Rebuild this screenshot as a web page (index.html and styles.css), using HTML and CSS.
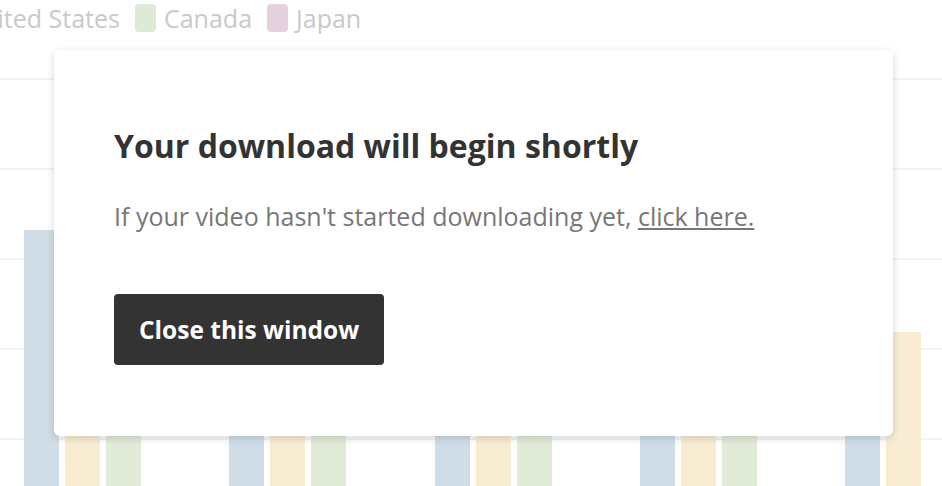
FILE: index.html
```html
<!DOCTYPE html>
<html lang="en">
<head>
    <meta charset="UTF-8">
    <title>Download</title>
    <link rel="stylesheet" href="styles.css">
</head>
<body>
    <div class="chart">
        <div class="legend">
            <span class="legend-item"><span class="swatch swatch-us"></span>United States</span>
            <span class="legend-item"><span class="swatch swatch-ca"></span>Canada</span>
            <span class="legend-item"><span class="swatch swatch-jp"></span>Japan</span>
        </div>

        <div class="plot">
            <div class="group">
                <div class="bar us" style="height: 298px"></div>
                <div class="bar ca" style="height: 210px"></div>
                <div class="bar jp" style="height: 160px"></div>
            </div>
            <div class="group">
                <div class="bar us" style="height: 250px"></div>
                <div class="bar ca" style="height: 180px"></div>
                <div class="bar jp" style="height: 140px"></div>
            </div>
            <div class="group">
                <div class="bar us" style="height: 230px"></div>
                <div class="bar ca" style="height: 200px"></div>
                <div class="bar jp" style="height: 120px"></div>
            </div>
            <div class="group">
                <div class="bar us" style="height: 270px"></div>
                <div class="bar ca" style="height: 190px"></div>
                <div class="bar jp" style="height: 150px"></div>
            </div>
            <div class="group">
                <div class="bar us" style="height: 240px"></div>
                <div class="bar ca" style="height: 196px"></div>
                <div class="bar jp" style="height: 30px"></div>
            </div>
        </div>
    </div>

    <div class="modal">
        <h2>Your download will begin shortly</h2>
        <p>If your video hasn't started downloading yet, <a href="#">click here.</a></p>
        <button>Close this window</button>
    </div>
</body>
</html>
```

FILE: styles.css
```css
html, body {
    margin: 0;
    height: 486px;
    overflow: hidden;
}
body {
    font-family: "Open Sans", Lato, sans-serif;
    background-color: #fff;
    position: relative;
}
.chart {
    width: 942px;
}
.legend {
    display: flex;
    gap: 15px;
    margin-left: -65px;
    padding-top: 4px;
    height: 28px;
    font-size: 25px;
    line-height: 28px;
    color: #c9c9c9;
}
.legend-item {
    display: flex;
    align-items: center;
    gap: 8px;
}
.swatch {
    width: 21px;
    height: 28px;
    border-radius: 4px;
}
.swatch-us { background-color: #d0dde6; }
.swatch-ca { background-color: #deeAd5; }
.swatch-jp { background-color: #e6d2de; }

.plot {
    margin-top: 46px;
    height: 450px;
    padding-left: 24px;
    display: flex;
    align-items: flex-end;
    gap: 88.25px;
    background-image: repeating-linear-gradient(to bottom, #f4f4f4 0, #f4f4f4 2px, transparent 2px, transparent 90px);
}
.group {
    display: flex;
    align-items: flex-end;
    gap: 6px;
}
.bar {
    width: 35px;
}
.bar.us { background-color: #d0dde6; }
.bar.ca { background-color: #f8ecd3; }
.bar.jp { background-color: #e1ebd8; }

.modal {
    position: absolute;
    left: 54px;
    top: 50px;
    width: 839px;
    height: 386px;
    box-sizing: border-box;
    padding: 76px 60px 0;
    background-color: #fff;
    border-radius: 6px;
    box-shadow: 0 2px 8px rgba(0,0,0,0.16);
}
.modal h2 {
    margin: 0;
    font-size: 32px;
    font-weight: bold;
    line-height: 40px;
    color: #333;
}
.modal p {
    margin: 34px 0 0;
    font-size: 25px;
    line-height: 32px;
    color: #777;
}
.modal a {
    color: #777;
}
.modal button {
    margin-top: 62px;
    height: 71px;
    padding: 0 25px;
    border: none;
    border-radius: 4px;
    background-color: #333;
    color: #fff;
    font-family: inherit;
    font-size: 24.5px;
    font-weight: bold;
    cursor: pointer;
}
```
